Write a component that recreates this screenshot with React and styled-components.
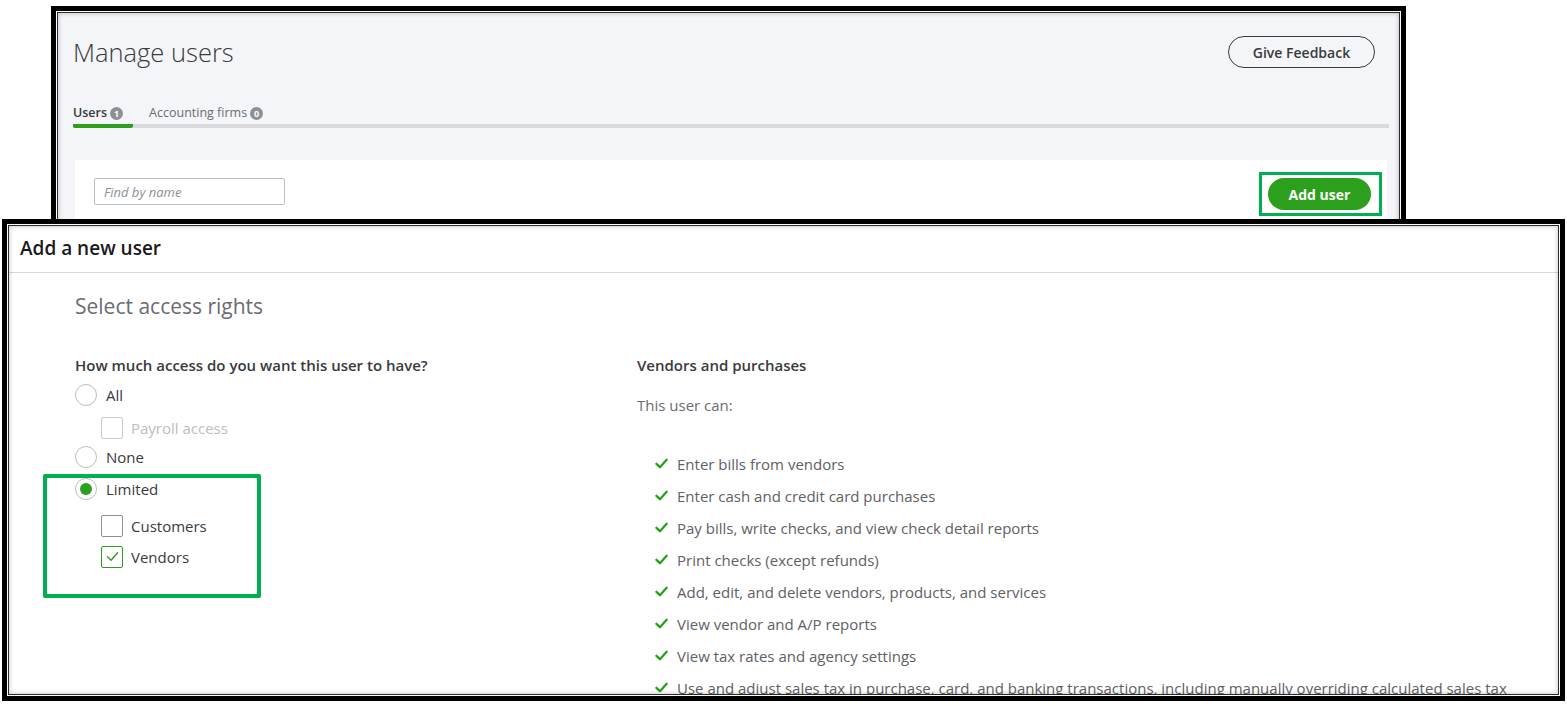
import React from 'react';
import styled, { createGlobalStyle } from 'styled-components';

const GlobalStyle = createGlobalStyle`
  html, body { margin: 0; padding: 0; background: #fff; }
  body { font-family: "Open Sans", "Liberation Sans", sans-serif; color: #393a3d; }
  * { box-sizing: border-box; }
`;

const permissions = [
    'Enter bills from vendors',
    'Enter cash and credit card purchases',
    'Pay bills, write checks, and view check detail reports',
    'Print checks (except refunds)',
    'Add, edit, and delete vendors, products, and services',
    'View vendor and A/P reports',
    'View tax rates and agency settings',
    'Use and adjust sales tax in purchase, card, and banking transactions, including manually overriding calculated sales tax',
];

const CheckMark = ({ size = 13, weight = 2.4 }) => (
    <svg width={size} height={size * 0.85} viewBox="0 0 13 11" fill="none">
        <path d="M1.5 5.8 L5 9.2 L11.6 1.8" stroke="#2ca01c" strokeWidth={weight} strokeLinecap="round" strokeLinejoin="round" />
    </svg>
);

const App = () => {
    return (
        <Page>
            <GlobalStyle />

            {/* ============== Manage users (screenshot 1) ============== */}
            <Shot $left={51} $width={1355} $height={224} $bg="#f4f5f8">
                <TopInner>
                    <TitleRow>
                        <PageTitle>Manage users</PageTitle>
                        <FeedbackButton>Give Feedback</FeedbackButton>
                    </TitleRow>

                    <Tabs>
                        <Tab $active>Users <Badge>1</Badge></Tab>
                        <Tab>Accounting firms <Badge>0</Badge></Tab>
                    </Tabs>

                    <Card>
                        <Search placeholder="Find by name" />
                        <Highlight>
                            <AddButton>Add user</AddButton>
                        </Highlight>
                    </Card>
                </TopInner>
            </Shot>

            {/* ============== Add a new user (screenshot 2) ============== */}
            <Shot $left={2} $width={1563} $height={482} $overlap={11} $bg="#fff">
                <DialogHeader>Add a new user</DialogHeader>
                <DialogBody>
                    <SectionTitle>Select access rights</SectionTitle>
                    <Columns>
                        <div>
                            <Question>How much access do you want this user to have?</Question>
                            <OptionRow $mt={9}><Radio />All</OptionRow>
                            <OptionRow $mt={11} $indent={26} $disabled><Box $disabled />Payroll access</OptionRow>
                            <OptionRow $mt={7}><Radio />None</OptionRow>
                            <LimitedGroup>
                                <OptionRow $mt={0}><Radio $checked />Limited</OptionRow>
                                <OptionRow $mt={15} $indent={26}><Box />Customers</OptionRow>
                                <OptionRow $mt={9} $indent={26}><Box $checked><CheckMark size={13} weight={1.4} /></Box>Vendors</OptionRow>
                            </LimitedGroup>
                        </div>
                        <div>
                            <Question>Vendors and purchases</Question>
                            <Note>This user can:</Note>
                            <PermList>
                                {permissions.map((p) => (
                                    <PermItem key={p}><CheckMark />{p}</PermItem>
                                ))}
                            </PermList>
                        </div>
                    </Columns>
                </DialogBody>
            </Shot>
        </Page>
    );
}

const Page = styled.div`
    width: 1567px;
    height: 706px;
    padding-top: 6px;
    overflow: hidden;
`

const Shot = styled.section`
    position: relative;
    margin-left: ${p => p.$left}px;
    margin-top: ${p => (p.$overlap ? -p.$overlap : 0)}px;
    width: ${p => p.$width}px;
    height: ${p => p.$height}px;
    border: 5px solid #000;
    background: ${p => p.$bg};
    overflow: hidden;

    &::after {
        content: '';
        position: absolute;
        inset: 0;
        pointer-events: none;
        box-shadow: inset 0 0 0 1px #fff, inset 0 0 0 2px #2b2b2b, inset 0 0 4px 3px rgba(0, 0, 0, 0.18);
    }
`

const TopInner = styled.div`
    padding: 25px 12px 0 17px;
`

const TitleRow = styled.div`
    display: flex;
    align-items: center;
    justify-content: space-between;
    height: 32px;
`

const PageTitle = styled.h1`
    margin: 0;
    font-size: 25.5px;
    line-height: 32px;
    font-weight: 300;
    color: #393a3d;
`

const FeedbackButton = styled.button`
    margin-right: 14px;
    width: 147px;
    height: 32px;
    border: 1.5px solid #393a3d;
    border-radius: 16px;
    background: transparent;
    font-family: inherit;
    font-size: 14px;
    font-weight: 600;
    color: #393a3d;
`

const Tabs = styled.div`
    display: flex;
    gap: 16px;
    margin-top: 36px;
    border-bottom: 4px solid #d8dade;
`

const Tab = styled.div`
    display: flex;
    align-items: center;
    gap: 3px;
    padding: 0 ${p => (p.$active ? 10 : 0)}px 2px 0;
    margin-bottom: -4px;
    font-size: 12.5px;
    line-height: 18px;
    font-weight: ${p => (p.$active ? 600 : 400)};
    color: ${p => (p.$active ? '#393a3d' : '#6b6c72')};
    border-bottom: 4px solid ${p => (p.$active ? '#2ca01c' : 'transparent')};
    border-radius: 2px;
`

const Badge = styled.span`
    display: inline-flex;
    align-items: center;
    justify-content: center;
    width: 13px;
    height: 13px;
    border-radius: 50%;
    background: #8d9096;
    color: #fff;
    font-size: 9px;
    font-weight: 700;
    line-height: 1;
`

const Card = styled.div`
    display: flex;
    align-items: flex-start;
    justify-content: space-between;
    height: 80px;
    margin: 32px 2px 0 2px;
    padding: 12px 5px 0 19px;
    background: #fff;
`

const Search = styled.input`
    margin-top: 6px;
    width: 191px;
    height: 27px;
    padding: 0 9px;
    border: 1px solid #babec5;
    border-radius: 2px;
    font-family: inherit;
    font-size: 13px;
    font-style: italic;
    outline: none;

    &::placeholder { color: #8d9096; }
`

const Highlight = styled.div`
    border: 3px solid #00b050;
    padding: 3px 8px 3px 6px;
    background: #fff;
`

const AddButton = styled.button`
    display: block;
    width: 103px;
    height: 32px;
    border: none;
    border-radius: 16px;
    background: #2ca01c;
    color: #fff;
    font-family: inherit;
    font-size: 14px;
    font-weight: 700;
`

const DialogHeader = styled.div`
    display: flex;
    align-items: center;
    height: 49px;
    padding-left: 13px;
    border-bottom: 1px solid #d4d7dc;
    font-size: 19px;
    font-weight: 600;
    color: #1a1a1c;
`

const DialogBody = styled.div`
    padding: 19px 0 0 68px;
`

const SectionTitle = styled.h2`
    margin: 0;
    font-size: 21px;
    line-height: 28px;
    font-weight: 400;
    color: #6b6c72;
`

const Columns = styled.div`
    display: grid;
    grid-template-columns: 562px 1fr;
    margin-top: 35px;
`

const Question = styled.div`
    font-size: 15px;
    line-height: 20px;
    font-weight: 600;
    color: #393a3d;
`

const OptionRow = styled.div`
    display: flex;
    align-items: center;
    gap: ${p => (p.$indent ? 8 : 9)}px;
    height: 22px;
    margin-top: ${p => p.$mt}px;
    padding-left: ${p => p.$indent || 0}px;
    font-size: 15px;
    color: ${p => (p.$disabled ? '#babec5' : '#393a3d')};
`

const Radio = styled.span`
    display: inline-flex;
    align-items: center;
    justify-content: center;
    width: 22px;
    height: 22px;
    border: 1px solid #babec5;
    border-radius: 50%;
    background: #fff;

    &::before {
        content: '';
        width: 12px;
        height: 12px;
        border-radius: 50%;
        background: ${p => (p.$checked ? '#2ca01c' : 'transparent')};
    }
`

const Box = styled.span`
    display: inline-flex;
    align-items: center;
    justify-content: center;
    width: 22px;
    height: 22px;
    border: 1px solid ${p => (p.$checked ? '#2ca01c' : p.$disabled ? '#c9ccd1' : '#8d9096')};
    border-radius: 2px;
    background: #fff;
`

const LimitedGroup = styled.div`
    width: 218px;
    margin: 6px 0 0 -32px;
    padding: 0 0 26px 28px;
    border: 4px solid #00b050;
    border-radius: 2px;
`

const Note = styled.div`
    margin-top: 20px;
    font-size: 15px;
    line-height: 20px;
    color: #6b6c72;
`

const PermList = styled.ul`
    list-style: none;
    margin: 33px 0 0 0;
    padding: 0 0 0 18px;
`

const PermItem = styled.li`
    display: flex;
    align-items: center;
    gap: 9px;
    height: 32px;
    font-size: 15px;
    color: #5f6065;
    white-space: nowrap;
`

export default App
